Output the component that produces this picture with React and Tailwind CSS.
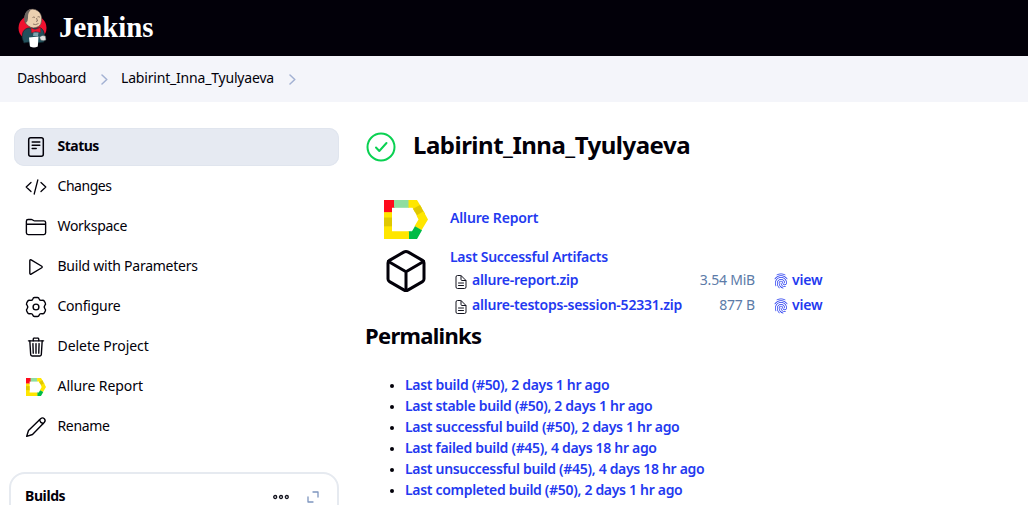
import React from "react";
import {
  IoFolderOutline,
  IoPlayOutline,
  IoTrashOutline,
  IoCubeOutline,
  IoFingerPrintOutline,
  IoDocumentTextOutline,
} from "react-icons/io5";

function JenkinsLogo() {
  return (
    <svg viewBox="0 0 30 40" className="h-10 w-[30px]">
      <ellipse cx="14.500" cy="20" rx="14" ry="13" fill="#f0112f" />
      <path d="M6 35L5 32.500Q3.500 30 4.500 26Q5 21.500 10 20L23 20Q26 22 26.500 27L26 34L19 35L18 38H12L11 34Z" fill="#22505c" stroke="#10252d" strokeWidth="0.700" />
      <path d="M7 14Q5.500 6 10 2.500Q15 -0.500 20 3Q24 6 23.700 12Q23.500 17 20.500 18.500Q15 21.500 10.500 18Q8 16.500 7 14Z" fill="#ecd0b0" stroke="#4a4040" strokeWidth="0.600" />
      <path d="M7.500 15.500Q4.500 7.500 9 3Q11 1 13.500 1Q9.500 4.500 10 10L9.500 13Z" fill="#6b645f" />
      <path d="M14.500 9.500Q16 8.500 17 9.500M19.500 9Q21 8.200 22 9.300M18.500 10L19.500 13L18 13.500M15 16Q17.500 17.500 20.500 15.500" fill="none" stroke="#6a5148" strokeWidth="0.700" />
      <path d="M13 20L17 21.500L22.500 19.500L22.500 24.500L17.500 23.500L13.500 25Z" fill="#ef142f" stroke="#7a1420" strokeWidth="0.400" />
      <path d="M15.500 24.500L20.500 24.500L20 28L15 28Z" fill="#7fa3ae" />
      <path d="M11 29.500L20.500 28.500L19.800 38.500Q16 40.300 12 38.500Z" fill="#ffffff" />
      <path d="M21.500 29Q24 26.500 27.500 28L28 32Q25 33.500 22.500 32Z" fill="#dfe1df" stroke="#39494c" strokeWidth="0.500" />
    </svg>
  );
}

function AllureLogo({ className }) {
  return (
    <svg viewBox="0 0 44 40" preserveAspectRatio="none" className={className}>
      <path d="M0 0H11V8H8V13H0Z" fill="#ff0a1c" />
      <path d="M10 0H25V8H10Z" fill="#8fdda0" />
      <path d="M24.500 0H33L38 8.500L31 12.500L28.500 8H24.500Z" fill="#ffe600" />
      <path d="M36 5L41 14L34 18L29 9Z" fill="#e0c800" />
      <path d="M39.500 11.500L44 20L37.500 31L30.500 27L34.500 20L32.500 16Z" fill="#ffe600" />
      <path d="M31 27L38 31L33 40H24.500V32H28Z" fill="#00bb46" />
      <path d="M0 26H8V32H25V40H0Z" fill="#ffe600" />
      <path d="M0 12.500H8V28H0Z" fill="#ffe600" />
      <path d="M0 18H8V27H0Z" fill="#e0c800" />
    </svg>
  );
}

function DetailsIcon({ className }) {
  return (
    <svg viewBox="0 0 22 22" className={className} fill="none" stroke="currentColor" strokeWidth="1.500" strokeLinecap="round">
      <rect x="3.700" y="1.700" width="14.600" height="18.600" rx="2" />
      <path d="M7.200 6H14.800M7.200 9.200H14.800M7.200 12.500H11.200" />
    </svg>
  );
}

function ChangesIcon({ className }) {
  return (
    <svg viewBox="0 0 22 22" className={className} fill="none" stroke="currentColor" strokeWidth="1.300" strokeLinecap="round" strokeLinejoin="round">
      <path d="M6 6.500L1.200 11L6 15.500M16 6.500L20.800 11L16 15.500M12.800 4L9.200 18" />
    </svg>
  );
}

function GearIcon({ className }) {
  return (
    <svg viewBox="0 0 22 22" className={className} fill="none" stroke="currentColor" strokeWidth="1.400" strokeLinejoin="round">
      <path d="M9.500 1.500H12.500Q13.800 1.500 14.200 3Q14.800 4.800 16.800 4.300Q18.500 3.800 19.300 5.200L20.300 7Q21 8.300 19.900 9.300Q18.500 11 19.900 12.700Q21 13.700 20.300 15L19.300 16.800Q18.500 18.200 16.800 17.700Q14.800 17.200 14.200 19Q13.800 20.500 12.500 20.500H9.500Q8.200 20.500 7.800 19Q7.200 17.200 5.200 17.700Q3.500 18.200 2.700 16.800L1.700 15Q1 13.700 2.100 12.700Q3.500 11 2.100 9.300Q1 8.300 1.700 7L2.700 5.200Q3.500 3.800 5.200 4.300Q7.200 4.800 7.800 3Q8.200 1.500 9.500 1.500Z" />
      <circle cx="11" cy="11" r="2.900" />
    </svg>
  );
}

function PencilIcon({ className }) {
  return (
    <svg viewBox="0 0 22 22" className={className} fill="none" stroke="currentColor" strokeWidth="1.400" strokeLinecap="round" strokeLinejoin="round">
      <path d="M1.700 20.300L3.500 14.500L15.600 2.800Q17.500 1 19.300 2.700Q21 4.500 19.200 6.400L7.500 18.500Z" />
      <path d="M14.500 4Q15.300 6.700 18 7.500" />
    </svg>
  );
}

function Chevron() {
  return (
    <svg viewBox="0 0 7 11" className="mt-0.5 h-[11px] w-[7px]" fill="none" stroke="#a3b1d3" strokeWidth="1.500" strokeLinecap="round" strokeLinejoin="round">
      <path d="M1 1L5.800 5.500L1 10" />
    </svg>
  );
}

const tasks = [
  { label: "Status", Icon: DetailsIcon, active: true, tracking: "tracking-[-0.5px]" },
  { label: "Changes", Icon: ChangesIcon, tracking: "tracking-[-0.45px]" },
  { label: "Workspace", Icon: IoFolderOutline, tracking: "tracking-[-0.3px]" },
  { label: "Build with Parameters", Icon: IoPlayOutline, tracking: "tracking-[-0.24px]" },
  { label: "Configure", Icon: GearIcon, tracking: "tracking-[-0.25px]" },
  { label: "Delete Project", Icon: IoTrashOutline, tracking: "tracking-[-0.05px]" },
  { label: "Allure Report", Icon: AllureLogo, tracking: "tracking-[-0.07px]" },
  { label: "Rename", Icon: PencilIcon, tracking: "tracking-[-0.35px]" },
];

const artifacts = [
  { name: "allure-report.zip", size: "3.54 MiB" },
  { name: "allure-testops-session-52331.zip", size: "877 B" },
];

const permalinks = [
  "Last build (#50), 2 days 1 hr ago",
  "Last stable build (#50), 2 days 1 hr ago",
  "Last successful build (#50), 2 days 1 hr ago",
  "Last failed build (#45), 4 days 18 hr ago",
  "Last unsuccessful build (#45), 4 days 18 hr ago",
  "Last completed build (#50), 2 days 1 hr ago",
];

function Sidebar() {
  return (
    <aside className="w-[339px] shrink-0 pt-[26px]">
      <nav className="flex flex-col gap-0.5 pl-3.5">
        {tasks.map(({ label, Icon, active, tracking }) => (
          <a
            key={label}
            className={
              active
                ? "flex h-[38px] items-center gap-[10.500px] rounded-[10px] bg-[#e6eaf2] pl-[11px] font-bold shadow-[inset_0_0_0_1px_#e0e5ee]"
                : "flex h-[38px] items-center gap-[10.500px] pl-[11px]"
            }
          >
            <Icon className={label === "Allure Report" ? "mx-px h-[18px] w-5" : "size-[22px]"} />
            <span className={`${tracking} -mt-0.5`}>{label}</span>
          </a>
        ))}
      </nav>
      <section className="mt-[26px] ml-[9px] flex h-24 items-start justify-between rounded-t-[16px] border-2 border-[#e6eaf0] pt-3 pr-[18px] pl-3.5">
        <h2 className="font-bold leading-5 tracking-[-0.4px]">Builds</h2>
        <div className="flex items-center gap-[18px] pt-[3px]">
          <svg viewBox="0 0 16 6" className="mt-0.5 h-1.5 w-4" fill="none" stroke="#14141f" strokeWidth="1.300">
            <circle cx="2.200" cy="3" r="1.500" />
            <circle cx="8" cy="3" r="1.500" />
            <circle cx="13.800" cy="3" r="1.500" />
          </svg>
          <svg viewBox="0 0 12 12" className="mt-0.5 size-3" fill="none" stroke="#7d95bf" strokeWidth="1.300" strokeLinecap="round" strokeLinejoin="round">
            <path d="M6 1H11V6M1 6V11H6" />
          </svg>
        </div>
      </section>
    </aside>
  );
}

function Artifacts() {
  return (
    <div className="flex h-[72px] pl-[17px]">
      <IoCubeOutline className="mt-px size-12" />
      <div className="ml-5 text-[#2339f0]">
        <a className="block h-[21px] font-semibold leading-[22px] tracking-[-0.27px]">Last Successful Artifacts</a>
        {artifacts.map((artifact) => (
          <div key={artifact.name} className="flex h-[25px] items-center">
            <IoDocumentTextOutline className="mt-1 ml-[3px] size-4 text-[#14141f]" />
            <a className="ml-[3px] w-[213px] whitespace-nowrap font-semibold tracking-[-0.22px]">{artifact.name}</a>
            <span className="w-[70px] text-right tracking-[-0.2px] text-[#5c7ba8]">{artifact.size}</span>
            <IoFingerPrintOutline className="mt-0.5 ml-[18px] size-4" />
            <a className="ml-[3px] font-semibold tracking-[-0.2px]">view</a>
          </div>
        ))}
      </div>
    </div>
  );
}

export default function App() {
  return (
    <div className="h-[505px] w-full overflow-hidden bg-white font-['Noto_Sans',sans-serif] text-sm text-[#020009]">
      <header className="flex h-14 items-center bg-[#020009] pl-[18px]">
        <JenkinsLogo />
        <span className="ml-[11px] -mt-0.5 font-['Liberation_Serif',serif] text-[28.800px] font-bold leading-8 text-white">Jenkins</span>
      </header>
      <nav className="flex h-[46px] items-center bg-[#f4f5fa] pb-0.5 pl-[17px]">
        <span className="w-[83.500px] tracking-[-0.4px]">Dashboard</span>
        <Chevron />
        <span className="ml-[13.500px] w-[167.500px] tracking-[-0.19px]">Labirint_Inna_Tyulyaeva</span>
        <Chevron />
      </nav>
      <div className="flex">
        <Sidebar />
        <main className="pl-[26px]">
          <div className="flex h-[90px] items-start">
            <svg viewBox="0 0 30 30" className="mt-[30px] ml-px size-[30px]" fill="none" stroke="#0ad152" strokeWidth="2" strokeLinecap="round" strokeLinejoin="round">
              <circle cx="15" cy="15" r="13.500" />
              <path d="M10 15.500L13.300 19L20.500 11" />
            </svg>
            <h1 className="mt-[23px] ml-[17px] text-2xl font-bold leading-10 tracking-[-0.5px]">Labirint_Inna_Tyulyaeva</h1>
          </div>
          <div className="flex h-[54px] items-start pl-[19px] pt-[7px]">
            <AllureLogo className="mt-px h-[39px] w-11" />
            <a className="mt-[9px] ml-[22px] font-semibold tracking-[-0.15px] text-[#2339f0]">Allure Report</a>
          </div>
          <Artifacts />
          <h2 className="-mt-px h-[57px] text-[22px] font-bold leading-9 tracking-[-0.7px]">Permalinks</h2>
          <ul className="list-disc pl-10 marker:text-[11px]">
            {permalinks.map((text) => (
              <li key={text} className="h-[21px] whitespace-nowrap leading-[21px]">
                <a className="font-semibold tracking-[-0.31px] text-[#2339f0]">{text}</a>
              </li>
            ))}
          </ul>
        </main>
      </div>
    </div>
  );
}
